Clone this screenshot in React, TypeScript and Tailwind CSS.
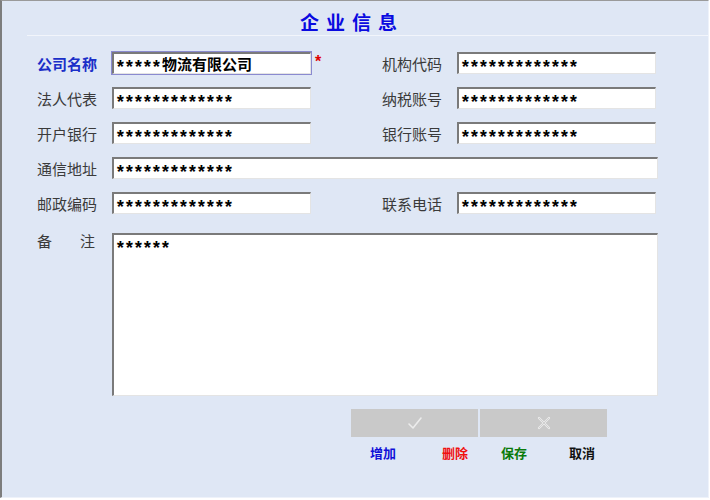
import React from "react";

const cjk = "font-['Noto_Sans_CJK_SC',sans-serif]";

// masked values: the asterisks get their own span so they can sit centred
const Masked = ({ value }: { value: string }) => {
  const m = value.match(/^(\*+)(.*)$/);
  const starPart = m ? m[1] : "";
  const rest = m ? m[2] : value;
  return (
    <span className="whitespace-nowrap leading-none flex items-center">
      <span className="font-['Liberation_Mono',monospace] font-bold text-[18px] leading-[14px] h-[14px] tracking-[-1.8px] text-black pt-[4px]">
        {starPart}
      </span>
      {rest && (
        <span className={`${cjk} font-bold text-[15px] text-black ml-[2px]`}>{rest}</span>
      )}
    </span>
  );
};

const Field = ({
  value,
  width = "w-[199px]",
  focused = false,
}: {
  value: string;
  width?: string;
  focused?: boolean;
}) => (
  <div
    className={`${width} h-[22px] bg-white border-t-2 border-l-2 border-b border-r border-t-[#7a7a7a] border-l-[#7a7a7a] border-b-[#e4e4e4] border-r-[#e4e4e4] ${
      focused ? "outline outline-1 outline-[#8a8ad0]" : ""
    } flex items-center pl-[1px]`}
  >
    <Masked value={value} />
  </div>
);

const Label = ({ text, strong = false }: { text: string; strong?: boolean }) => (
  <div
    className={`w-[75px] shrink-0 text-[15px] leading-none ${cjk} ${
      strong ? "font-bold text-[#1b2fc8]" : "text-[#3a3a3a]"
    }`}
  >
    {text}
  </div>
);

const stars = "*************";

const Row = ({
  left,
  right,
}: {
  left: [string, string, boolean?];
  right: [string, string];
}) => (
  <div className="flex items-center h-[22px]">
    <Label text={left[0]} strong={left[2]} />
    <Field value={left[1]} focused={left[2]} />
    <div className="w-[71px] h-full flex items-start pl-[4px]">
      {left[2] && (
        <span className="text-[#e00000] font-bold text-[16px] leading-none font-['Liberation_Sans',sans-serif] mt-[2px]">
          *
        </span>
      )}
    </div>
    <Label text={right[0]} />
    <Field value={right[1]} />
  </div>
);

export default function App() {
  return (
    <div className="w-[710px] h-[500px] bg-white">
      <div className="w-[709px] h-[498px] bg-[#dfe7f5] border-l-2 border-t border-l-[#7d7d7d] border-t-[#9a9a9a] border-r border-b border-r-[#eef2fa] border-b-[#eef2fa] flex flex-col">
        {/* heading */}
        <div className="h-[34px] flex items-end justify-center pb-[4px]">
          <span
            className={`${cjk} text-[19px] font-bold text-[#0a0ae0] tracking-[7px] leading-none ml-[-6px]`}
          >
            企业信息
          </span>
        </div>
        <div className="ml-[25px] h-[1px] bg-[#a9b3c4] border-b border-b-[#f2f5fb]" />

        <div className="pl-[35px] pt-[16px] flex flex-col gap-[13px]">
          <Row left={["公司名称", "*****物流有限公司", true]} right={["机构代码", stars]} />
          <Row left={["法人代表", stars]} right={["纳税账号", stars]} />
          <Row left={["开户银行", stars]} right={["银行账号", stars]} />
          <div className="flex items-center h-[22px]">
            <Label text="通信地址" />
            <Field value={stars} width="w-[546px]" />
          </div>
          <Row left={["邮政编码", stars]} right={["联系电话", stars]} />
        </div>

        <div className="pl-[35px] pt-[19px] flex">
          <div className={`w-[75px] flex text-[15px] leading-none text-[#3a3a3a] ${cjk}`}>
            <span>备</span>
            <span className="ml-[28px]">注</span>
          </div>
          <div className="w-[546px] h-[163px] bg-white border-t-2 border-l-2 border-b border-r border-t-[#7a7a7a] border-l-[#7a7a7a] border-b-[#e4e4e4] border-r-[#e4e4e4] pl-[1px] pt-[3px] flex items-start">
            <Masked value="******" />
          </div>
        </div>

        {/* toolbar */}
        <div className="pl-[349px] pt-[13px] flex gap-[2px]">
          <button className="w-[127px] h-[28px] bg-[#c9c9c9] flex items-center justify-center">
            <svg width="16" height="14" viewBox="0 0 16 14" fill="none">
              <path
                d="M2 8 L6 12 L14 2"
                stroke="#ececec"
                strokeWidth="1.6"
                strokeLinecap="round"
                strokeLinejoin="round"
              />
            </svg>
          </button>
          <button className="w-[127px] h-[28px] bg-[#c9c9c9] flex items-center justify-center">
            <svg width="14" height="14" viewBox="0 0 14 14" fill="none">
              <path
                d="M2 2 L12 12 M12 2 L2 12"
                stroke="#ececec"
                strokeWidth="2.2"
                strokeLinecap="round"
              />
              <path d="M2 2 L12 12 M12 2 L2 12" stroke="#c9c9c9" strokeWidth="0.8" />
            </svg>
          </button>
        </div>
        <div className={`pl-[368px] pt-[9px] flex text-[13px] font-bold leading-none ${cjk}`}>
          <span className="text-[#1010d8]">增加</span>
          <span className="ml-[46px] text-[#f01010]">删除</span>
          <span className="ml-[33px] text-[#0a7a0a]">保存</span>
          <span className="ml-[42px] text-[#111]">取消</span>
        </div>
      </div>
    </div>
  );
}
